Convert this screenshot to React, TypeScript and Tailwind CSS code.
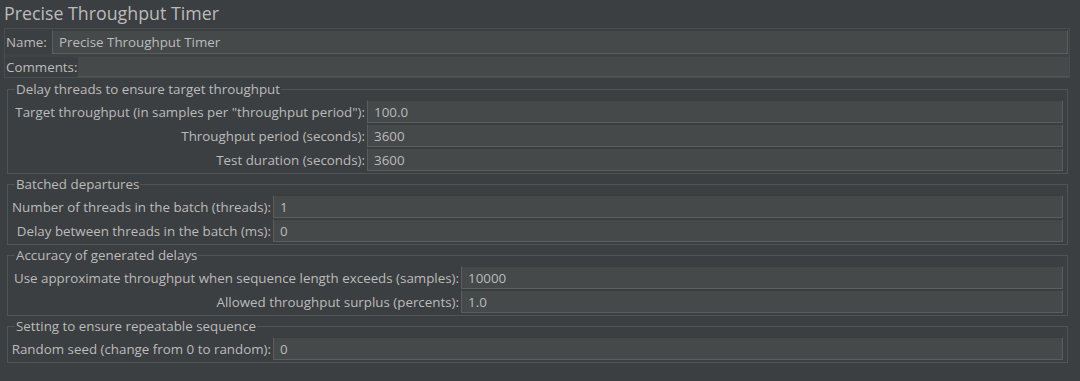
import React from "react";

type Row = { label: string; value: string };
type Group = { title: string; labelCol: string; rows: Row[] };

const groups: Group[] = [
  {
    title: "Delay threads to ensure target throughput",
    labelCol: "grid-cols-[356px_1fr]",
    rows: [
      { label: 'Target throughput (in samples per "throughput period"):', value: "100.0" },
      { label: "Throughput period (seconds):", value: "3600" },
      { label: "Test duration (seconds):", value: "3600" },
    ],
  },
  {
    title: "Batched departures",
    labelCol: "grid-cols-[262px_1fr]",
    rows: [
      { label: "Number of threads in the batch (threads):", value: "1" },
      { label: "Delay between threads in the batch (ms):", value: "0" },
    ],
  },
  {
    title: "Accuracy of generated delays",
    labelCol: "grid-cols-[450px_1fr]",
    rows: [
      { label: "Use approximate throughput when sequence length exceeds (samples):", value: "10000" },
      { label: "Allowed throughput surplus (percents):", value: "1.0" },
    ],
  },
  {
    title: "Setting to ensure repeatable sequence",
    labelCol: "grid-cols-[262px_1fr]",
    rows: [{ label: "Random seed (change from 0 to random):", value: "0" }],
  },
];

function Field({ value }: { value: string }) {
  return (
    <div className="h-[23px] bg-[#45494a] border border-[#5b5e5f] border-t-[#3a3d3e] flex items-center pl-[6px] whitespace-nowrap">
      {value}
    </div>
  );
}

export default function App() {
  return (
    <div className="w-[1080px] h-[381px] overflow-hidden bg-[#3c3f41] text-[#bbbbbb] font-['Open_Sans',sans-serif] text-[13.35px] leading-[16px]">
      <div className="h-[28px] pl-[4px] pt-[2px] text-[17.8px] leading-[22px]">Precise Throughput Timer</div>

      <div className="ml-[4px] mr-[10px] border border-[#4a4d4f] flex flex-col">
        <div className="flex items-center h-[25px]">
          <span className="w-[47px] pl-[1px] whitespace-nowrap">Name:</span>
          <div className="flex-1 mr-[1px] h-[24px] bg-[#45494a] border border-[#5b5e5f] border-t-[#3a3d3e] flex items-center pl-[6px]">
            Precise Throughput Timer
          </div>
        </div>
        <div className="h-[3px] bg-[#404345]" />
        <div className="flex items-center h-[20px]">
          <span className="w-[73px] pl-[1px] whitespace-nowrap">Comments:</span>
          <div className="flex-1 h-[20px] bg-[#45494a] border-b border-[#525556]" />
        </div>
      </div>

      <div className="ml-[7px] mr-[12px] mt-[3px] flex flex-col gap-[2px]">
        {groups.map((g) => (
          <fieldset key={g.title} className="border border-[#515456] pl-[3px] pr-[4px] pt-[3px] pb-[2px]">
            <legend className="ml-[4px] px-[1px] leading-[16px] whitespace-nowrap">{g.title}</legend>
            <div className={`grid ${g.labelCol} gap-y-[1px]`}>
              {g.rows.map((r) => (
                <React.Fragment key={r.label}>
                  <div className="h-[23px] flex items-center justify-end pr-[2px] whitespace-nowrap">{r.label}</div>
                  <Field value={r.value} />
                </React.Fragment>
              ))}
            </div>
          </fieldset>
        ))}
      </div>
    </div>
  );
}
